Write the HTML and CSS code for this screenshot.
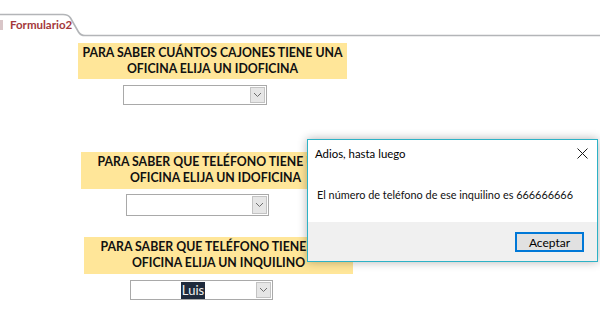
FILE: index.html
```html
<!DOCTYPE html>
<html lang="es">
<head>
    <meta charset="UTF-8">
    <meta name="viewport" content="width=device-width, initial-scale=1.0">
    <title>Formulario2</title>
    <link rel="stylesheet" href="styles.css">
</head>
<body>
    <!-- pestaña del formulario -->
    <div class="tabbar">
        <svg class="tab-shape" width="600" height="37" viewBox="0 0 600 37">
            <path d="M0 14.5 H63 Q68.5 14.5 70.5 18 L78.5 32 Q80.5 35.5 85 35.5 H600" fill="none" stroke="#b3b5b8" stroke-width="1.6"/>
        </svg>
        <span class="tab-icon"></span>
        <span class="tab-label">Formulario2</span>
    </div>

    <!-- campos -->
    <main class="form">
        <section class="field field-1">
            <div class="caption">PARA SABER CUÁNTOS CAJONES TIENE UNA<br>OFICINA ELIJA UN IDOFICINA</div>
            <div class="combo">
                <span class="combo-value"></span>
                <span class="combo-btn"><svg width="9" height="6" viewBox="0 0 9 6"><path d="M1 1 L4.5 4.5 L8 1" fill="none" stroke="#6e6e6e" stroke-width="1"/></svg></span>
            </div>
        </section>

        <section class="field field-2">
            <div class="caption">PARA SABER QUE TELÉFONO TIENE UNA<br>OFICINA ELIJA UN IDOFICINA</div>
            <div class="combo">
                <span class="combo-value"></span>
                <span class="combo-btn"><svg width="9" height="6" viewBox="0 0 9 6"><path d="M1 1 L4.5 4.5 L8 1" fill="none" stroke="#6e6e6e" stroke-width="1"/></svg></span>
            </div>
        </section>

        <section class="field field-3">
            <div class="caption">PARA SABER QUE TELÉFONO TIENE UNA<br>OFICINA ELIJA UN INQUILINO</div>
            <div class="combo">
                <span class="combo-value"><span class="selected">Luis</span></span>
                <span class="combo-btn"><svg width="9" height="6" viewBox="0 0 9 6"><path d="M1 1 L4.5 4.5 L8 1" fill="none" stroke="#6e6e6e" stroke-width="1"/></svg></span>
            </div>
        </section>
    </main>

    <!-- cuadro de mensaje -->
    <div class="dialog">
        <div class="dialog-head">
            <span class="dialog-title">Adios, hasta luego</span>
            <svg class="dialog-close" width="11" height="11" viewBox="0 0 11 11"><path d="M0.5 0.5 L10.5 10.5 M10.5 0.5 L0.5 10.5" stroke="#1a1a1a" stroke-width="1"/></svg>
        </div>
        <div class="dialog-body">El número de teléfono de ese inquilino es 666666666</div>
        <div class="dialog-foot">
            <button class="btn">Aceptar</button>
        </div>
    </div>
</body>
</html>
```

FILE: styles.css
```css
/* general */
body {
    margin: 0;
    background: #fff;
    font-family: Lato, "Noto Sans", sans-serif;
    color: #000;
    position: relative;
    width: 600px;
    height: 309px;
    overflow: hidden;
}

/* pestaña */
.tabbar {
    position: relative;
    height: 37px;
    display: flex;
    align-items: flex-start;
}

.tab-shape {
    position: absolute;
    top: 0;
    left: 0;
}

.tab-icon {
    margin-top: 20px;
    width: 3px;
    height: 10px;
    background: #d9c6c8;
}

.tab-label {
    position: relative;
    margin: 18px 0 0 7px;
    font-size: 11.5px;
    font-weight: 700;
    color: #a4373a;
}

/* formulario */
.form {
    padding-top: 6px;
    display: flex;
    flex-direction: column;
    align-items: flex-start;
}

.caption {
    width: 269px;
    box-sizing: border-box;
    background: #ffe699;
    font-family: Lato, "Liberation Sans", sans-serif;
    font-weight: 700;
    font-size: 12.3px;
    line-height: 16px;
    text-align: center;
    white-space: nowrap;
    color: #111;
    padding-top: 2px;
}

.combo {
    box-sizing: border-box;
    width: 144px;
    height: 20px;
    border: 1px solid #a9a9a9;
    background: #fff;
    display: flex;
    margin-left: 45px;
}

.combo-value {
    flex: 1;
    display: flex;
    align-items: center;
    justify-content: center;
    font-size: 13px;
}

.selected {
    background: #1f2a3c;
    color: #f2f2f2;
    padding: 0 1px;
    line-height: 17px;
}

.combo-btn {
    width: 15px;
    margin: 1px;
    box-sizing: border-box;
    border: 1px solid #c3c3c3;
    background: #e6e6e6;
    display: flex;
    align-items: center;
    justify-content: center;
}

.field-1 {
    margin-left: 78px;
}
.field-1 .caption {
    height: 36px;
}
.field-1 .combo {
    margin-top: 6px;
}

.field-2 {
    margin: 47px 0 0 81px;
}
.field-2 .caption {
    height: 37px;
}
.field-2 .combo {
    margin-top: 5px;
    width: 143px;
    height: 22px;
}

.field-3 {
    margin: 21px 0 0 84px;
}
.field-3 .caption {
    height: 37px;
}
.field-3 .combo {
    margin: 6px 0 0 46px;
    width: 143px;
}

/* cuadro de mensaje */
.dialog {
    position: absolute;
    left: 307px;
    top: 139px;
    width: 291px;
    height: 123px;
    box-sizing: border-box;
    border: 1px solid #2cb2c6;
    background: #fff;
    display: flex;
    flex-direction: column;
    box-shadow: 0 0 9px rgba(0, 0, 0, 0.3);
    font-size: 11.4px;
}

.dialog-head {
    height: 26px;
    display: flex;
    align-items: center;
    justify-content: space-between;
    padding: 0 9px 0 7px;
}

.dialog-body {
    height: 56px;
    box-sizing: border-box;
    padding: 21px 0 0 9px;
    font-size: 10.9px;
    line-height: 16px;
    white-space: nowrap;
    color: #111;
}

.dialog-foot {
    flex: 1;
    background: #f0f0f0;
    display: flex;
    justify-content: flex-end;
    align-items: flex-start;
    padding: 10px 13px 0 0;
}

.btn {
    width: 69px;
    height: 20px;
    box-sizing: border-box;
    border: 1px solid #0078d7;
    box-shadow: inset 0 0 0 1px #0078d7;
    background: #e1e1e1;
    font-family: Lato, "Noto Sans", sans-serif;
    font-size: 12px;
    color: #000;
    padding: 0;
}
```
